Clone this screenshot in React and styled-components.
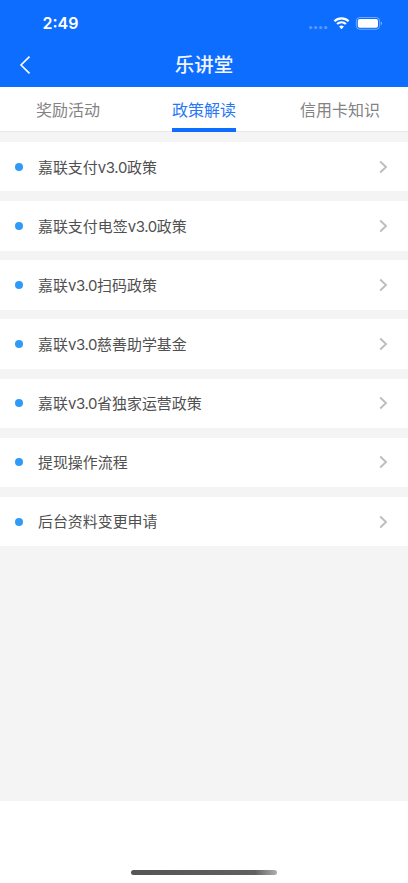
import React from "react";
import styled, { createGlobalStyle } from "styled-components";

const GlobalStyle = createGlobalStyle`
  * { box-sizing: border-box; }
  body {
    margin: 0;
    background: #fff;
    font-family: Inter, "Noto Sans CJK SC", sans-serif;
  }
`;

const Screen = styled.div`
  display: flex;
  flex-direction: column;
  width: 408px;
  height: 883px;
  overflow: hidden;
  background: #fff;
`;

const Header = styled.header`
  flex: none;
  height: 87px;
  background: #0d6dff;
  color: #fff;
`;

const StatusBar = styled.div`
  display: flex;
  align-items: center;
  justify-content: space-between;
  height: 43px;
  padding: 4px 25px 0 42.5px;
`;

const Clock = styled.span`
  padding-bottom: 2px;
  font-size: 16px;
  font-weight: 570;
  line-height: 20px;
`;

const StatusIcons = styled.svg`
  display: block;
  margin-bottom: 1px;
`;

const NavBar = styled.div`
  display: grid;
  grid-template-columns: 60px 1fr 60px;
  align-items: center;
  height: 44px;
`;

const BackButton = styled.button`
  display: flex;
  padding: 0 0 0 19px;
  border: 0;
  background: none;
  color: inherit;
`;

const Title = styled.h1`
  margin: 0;
  color: #f0f5ff;
  font-size: 19.5px;
  font-weight: 500;
  line-height: 28px;
  text-align: center;
`;

const Tabs = styled.nav`
  flex: none;
  display: grid;
  grid-template-columns: repeat(3, 1fr);
  justify-items: center;
  height: 45px;
  border-bottom: 1px solid #e8e8e8;
`;

const Tab = styled.button`
  height: 45px;
  padding: 5px 0 0;
  border: 0;
  border-bottom: 4px solid ${(p) => (p.$active ? "#0d6dff" : "transparent")};
  background: none;
  color: ${(p) => (p.$active ? "#2878f5" : "#838383")};
  font: 400 16px/24px Inter, "Noto Sans CJK SC", sans-serif;
`;

const List = styled.main`
  flex: none;
  display: flex;
  flex-direction: column;
  gap: 9.75px;
  height: 669px;
  padding-top: 10px;
  background: #f4f4f4;
`;

const Row = styled.div`
  flex: none;
  display: flex;
  align-items: center;
  height: 49.4px;
  padding: 0 20px 0 15px;
  background: #fff;
`;

const Dot = styled.span`
  width: 8px;
  height: 8px;
  margin-right: 15px;
  border-radius: 50%;
  background: #2f9bf7;
`;

const Label = styled.span`
  flex: 1;
  padding-top: 1.8px;
  color: #505050;
  font-size: 14.95px;
  line-height: 22px;
`;

const Latin = styled.span`
  letter-spacing: -0.35px;
`;

const Footer = styled.footer`
  flex: 1;
  display: flex;
  align-items: flex-end;
  justify-content: center;
  padding-bottom: 8px;
`;

const HomeIndicator = styled.div`
  width: 146px;
  height: 5px;
  border-radius: 3px;
  background: linear-gradient(90deg, #555 0%, #606060 85%, #b0b0b0 100%);
`;

const tabs = ["奖励活动", "政策解读", "信用卡知识"];

const items = [
  "嘉联支付v3.0政策",
  "嘉联支付电签v3.0政策",
  "嘉联v3.0扫码政策",
  "嘉联v3.0慈善助学基金",
  "嘉联v3.0省独家运营政策",
  "提现操作流程",
  "后台资料变更申请",
];

function SystemIcons() {
  return (
    <StatusIcons width="76" height="16" viewBox="307 15 76 16" fill="none">
      <g fill="#fff" fillOpacity="0.3">
        <circle cx="310.7" cy="27.6" r="1.7" />
        <circle cx="315.7" cy="27.6" r="1.7" />
        <circle cx="320.7" cy="27.6" r="1.7" />
        <circle cx="325.7" cy="27.6" r="1.7" />
      </g>
      <g stroke="#fff" strokeWidth="2.2">
        <path d="M334.4 21.2a10.1 10.1 0 0 1 14.2 0" />
        <path d="M337.1 24.1a6.2 6.2 0 0 1 8.8 0" />
      </g>
      <path d="M341.5 29.2l-2.4-2.6a3.5 3.5 0 0 1 4.8 0z" fill="#fff" />
      <rect x="356.3" y="17.5" width="23.3" height="11.8" rx="3.5" stroke="#fff" strokeOpacity="0.4" />
      <rect x="357.8" y="19" width="20.2" height="8.8" rx="2" fill="#fff" />
      <path d="M380.8 21.6c1.6.5 1.6 3.1 0 3.6z" fill="#fff" fillOpacity="0.5" />
    </StatusIcons>
  );
}

function RowLabel({ text }) {
  return (
    <Label>
      {text.split(/(v3\.0)/).map((part, i) =>
        part === "v3.0" ? <Latin key={i}>{part}</Latin> : part
      )}
    </Label>
  );
}

export default function App() {
  return (
    <Screen>
      <GlobalStyle />
      <Header>
        <StatusBar>
          <Clock>2:49</Clock>
          <SystemIcons />
        </StatusBar>
        <NavBar>
          <BackButton aria-label="返回">
            <svg width="12" height="20" viewBox="0 0 12 20" fill="none">
              <path d="M10.5 1.6L2 10l8.5 8.4" stroke="#fff" strokeWidth="1.6" />
            </svg>
          </BackButton>
          <Title>乐讲堂</Title>
        </NavBar>
      </Header>
      <Tabs>
        {tabs.map((tab, i) => (
          <Tab key={tab} $active={i === 1}>{tab}</Tab>
        ))}
      </Tabs>
      <List>
        {items.map((item) => (
          <Row key={item}>
            <Dot />
            <RowLabel text={item} />
            <svg width="9" height="14" viewBox="0 0 9 14" fill="none">
              <path d="M1.2 1.5L7 7l-5.8 5.5" stroke="#bdbdbd" strokeWidth="1.9" />
            </svg>
          </Row>
        ))}
      </List>
      <Footer>
        <HomeIndicator />
      </Footer>
    </Screen>
  );
}
